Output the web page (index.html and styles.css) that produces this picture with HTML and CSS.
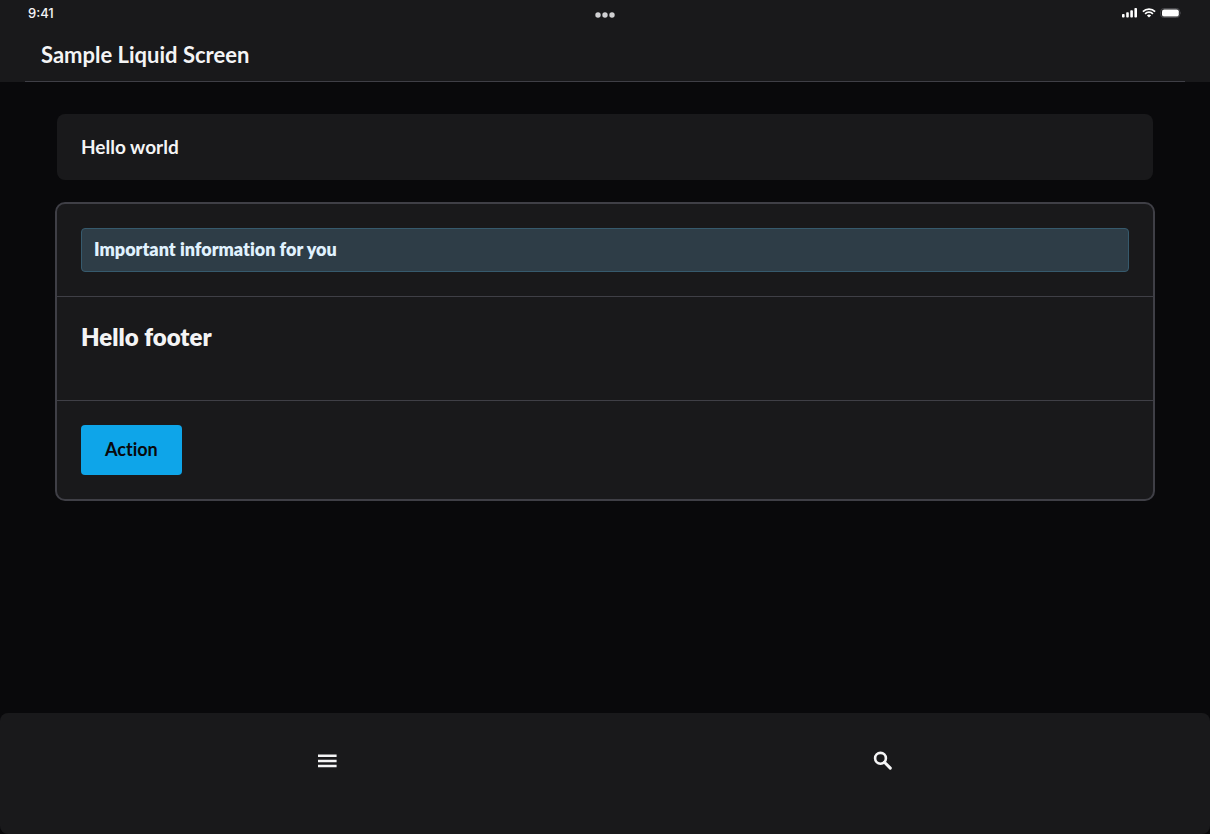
FILE: index.html
```html
<!DOCTYPE html>
<html lang="en">
<head>
<meta charset="utf-8">
<meta name="viewport" content="width=device-width, initial-scale=1">
<title>Sample Liquid Screen</title>
<link rel="stylesheet" href="styles.css">
</head>
<body>
<header class="header">
  <div class="status">
    <time class="clock">9:41</time>
    <svg class="dots" width="20" height="6" viewBox="0 0 20 6" aria-hidden="true"><circle cx="3" cy="3" r="2.7"/><circle cx="10" cy="3" r="2.7"/><circle cx="17" cy="3" r="2.7"/></svg>
    <div class="signals">
      <svg width="16" height="10" viewBox="0 0 16 10" aria-hidden="true"><rect x="0" y="6" width="2.6" height="3.5" rx=".8"/><rect x="4.2" y="4.3" width="2.6" height="5.2" rx=".8"/><rect x="8.3" y="2.3" width="2.6" height="7.2" rx=".8"/><rect x="12.4" y="0" width="2.6" height="9.5" rx=".8"/></svg>
      <svg width="14" height="10" viewBox="0 0 14 10" aria-hidden="true"><path d="M.9 3.6a8.7 8.7 0 0 1 12.2 0M3.1 5.8a5.6 5.6 0 0 1 7.8 0" fill="none" stroke="currentColor" stroke-width="1.8"/><path d="M7 9.6 4.9 7.5a3 3 0 0 1 4.2 0z"/></svg>
      <svg width="22" height="10" viewBox="0 0 22 10" aria-hidden="true"><rect x=".7" y=".5" width="19" height="9" rx="3" fill="none" stroke="#47474b"/><rect x="2" y="1.4" width="16.8" height="7.2" rx="2.2"/><path d="M20.4 3.5q1.4 1.5 0 3z" fill="#55555a"/></svg>
    </div>
  </div>
  <h1 class="title">Sample Liquid Screen</h1>
</header>
<main class="content">
  <section class="card"><p class="lead">Hello world</p></section>
  <section class="panel">
    <div class="section"><p class="notice">Important information for you</p></div>
    <div class="section section-tall"><h2 class="subtitle">Hello footer</h2></div>
    <div class="section"><button class="action" type="button">Action</button></div>
  </section>
</main>
<nav class="tabs" aria-label="Main">
  <button class="tab" type="button" aria-label="Menu"><svg width="24" height="24" viewBox="0 0 24 24" aria-hidden="true"><path d="M2 5.6h18.6v2.5H2zM2 10.7h18.6v2.5H2zM2 15.8h18.6v2.5H2z"/></svg></button>
  <button class="tab" type="button" aria-label="Search"><svg width="24" height="24" viewBox="0 0 24 24" aria-hidden="true"><g fill="none" stroke="currentColor"><circle cx="9.5" cy="9.3" r="5.4" stroke-width="2.6"/><path d="m13.4 13.2 5.9 5.9" stroke-width="3" stroke-linecap="round"/></g></svg></button>
</nav>
</body>
</html>
```
FILE: styles.css
```css
* { box-sizing: border-box; }

body {
  display: flex;
  flex-direction: column;
  min-height: 100vh;
  margin: 0;
  background: #09090b;
  color: #f4f4f5;
  font-family: Lato, sans-serif;
  font-variant-ligatures: no-common-ligatures;
}

h1, h2, p { margin: 0; }

svg {
  display: block;
  fill: currentColor;
}

.header {
  background: #19191b;
}

.status {
  display: grid;
  grid-template-columns: 1fr auto 1fr;
  align-items: center;
  height: 26px;
  padding: 0 28px;
}

.clock {
  font: 500 13px/16px Inter, sans-serif;
}

.dots {
  margin-top: 3px;
  color: #d0d0d2;
}

.signals {
  display: flex;
  justify-content: flex-end;
  gap: 4px;
  color: #fff;
}

.title {
  margin: 0 25px;
  padding: 15px 16px 12px;
  border-bottom: 1px solid #3f3f46;
  font-size: 22px;
  font-weight: 700;
  line-height: 28px;
}

.content {
  flex: 1;
  padding: 32px 55px;
}

.card {
  margin: 0 2px 22px;
  padding: 21px 24px;
  border-radius: 8px;
  background: #19191b;
}

.lead {
  font-size: 19px;
  font-weight: 700;
  line-height: 24px;
}

.panel {
  border: 2px solid #3f3f46;
  border-radius: 10px;
  background: #19191b;
}

.section {
  padding: 24px;
}

.section + .section {
  border-top: 1px solid #3f3f46;
}

.section-tall {
  padding-bottom: 47px;
}

.notice {
  padding: 8px 12px 10px;
  border: 1px solid #365a6d;
  border-radius: 4px;
  background: #2e3d47;
  color: #e0f2fe;
  font-size: 18px;
  font-weight: 800;
  line-height: 24px;
}

.subtitle {
  font-size: 24px;
  font-weight: 800;
  line-height: 32px;
}

.action {
  display: block;
  padding: 12px 24px 14px;
  border: 0;
  border-radius: 4px;
  background: #0ea5e9;
  color: #09090b;
  font-family: inherit;
  font-size: 18px;
  font-weight: 700;
  line-height: 24px;
  font-variant-ligatures: inherit;
}

.tabs {
  display: flex;
  padding: 32px 50px 58px;
  border-radius: 8px;
  background: #19191b;
}

.tab {
  display: flex;
  flex: 1;
  justify-content: center;
  padding: 4px 0 3px;
  border: 0;
  background: none;
  color: #f4f4f5;
}
```
